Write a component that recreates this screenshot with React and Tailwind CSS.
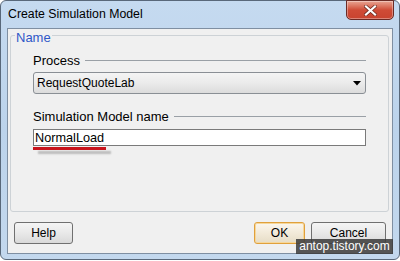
export default function App() {
    const font = { fontFamily: '"Liberation Sans", Arial, sans-serif' };

    return (
        <div className="w-[400px] h-[261px] bg-white" style={font}>
            <div className="flex flex-col w-[400px] h-[260px] rounded-[6px] border border-[#59687a] bg-gradient-to-b from-[#c5daf0] via-[#bcd3eb] to-[#c3d8ee] px-[6px] pb-[5px]">
                <div className="flex h-[27px] shrink-0 items-start justify-between">
                    <span className="pl-[1px] pt-[6px] text-[12.3px] leading-[14px] text-black">Create Simulation Model</span>
                    <div className="mr-[-1px] mt-[-1px] flex h-[20px] w-[48px] items-center justify-center rounded-b-[5px] border border-[#6b2b25] bg-gradient-to-b from-[#e8a493] via-[#cf4b36] to-[#c8432f] shadow-[inset_0_0_0_1px_rgba(255,255,255,0.35)]">
                        <svg width="13" height="11" viewBox="0 0 13 11">
                            <path d="M2 1.5 L11 9.5 M11 1.5 L2 9.5" stroke="#6a2a20" strokeWidth="3.6" strokeLinecap="square" />
                            <path d="M2 1.5 L11 9.5 M11 1.5 L2 9.5" stroke="#ffffff" strokeWidth="2.2" strokeLinecap="square" />
                        </svg>
                    </div>
                </div>

                <div className="flex flex-1 flex-col border border-[#7f8fa2] bg-[#f0f0f0] px-[2px]">
                    <div className="relative mt-[6px] mr-[1px] h-[177px] rounded-[3px] border border-[#cdd2d6] px-[22px] pt-[17px]">
                        <span className="absolute left-[4px] top-[-6px] bg-[#f0f0f0] px-[1px] text-[13px] leading-[15px] text-[#2f58c8]">Name</span>

                        <div className="flex h-[15px] items-center gap-[5px]">
                            <span className="text-[13px] leading-[15px] text-black">Process</span>
                            <div className="h-px flex-1 bg-[#9aa0a6]"></div>
                        </div>

                        <div className="mt-[4px] flex h-[22px] items-center justify-between rounded-[3px] border border-[#8a8f95] bg-gradient-to-b from-[#f4f4f4] via-[#ebebeb] to-[#dcdcdc] pl-[3px] pr-[4px]">
                            <span className="text-[12px] leading-[14px] text-black">RequestQuoteLab</span>
                            <svg width="8" height="5" viewBox="0 0 8 5">
                                <path d="M0 0 H8 L4 4.5 Z" fill="#000" />
                            </svg>
                        </div>

                        <div className="mt-[15px] flex h-[15px] items-center gap-[5px]">
                            <span className="text-[13px] leading-[15px] text-black">Simulation Model name</span>
                            <div className="h-px flex-1 bg-[#9aa0a6]"></div>
                        </div>

                        <div className="mt-[5px] flex h-[17px] items-center border border-[#7a7a7a] bg-white pl-[1px]">
                            <span className="text-[12.7px] leading-[14px] text-black">NormalLoad</span>
                        </div>

                        <div className="mt-[1px] w-[73px] h-[3px] bg-[#c8141c] shadow-[5px_4px_2px_rgba(0,0,0,0.22)]"></div>
                    </div>

                    <div className="relative mt-[10px] flex items-center justify-between pl-[4px] pr-[4px]">
                        <button className="flex h-[22px] w-[59px] items-center justify-center rounded-[3px] border border-[#707070] bg-gradient-to-b from-[#f5f5f5] via-[#e9e9e9] to-[#d9d9d9] text-[12px] leading-[14px] text-black">Help</button>
                        <div className="flex gap-[6px]">
                            <button className="flex h-[22px] w-[51px] items-center justify-center rounded-[3px] border border-[#e0a03c] bg-gradient-to-b from-[#fbf6ee] via-[#f2ead9] to-[#e6dcc6] text-[12px] leading-[14px] text-black shadow-[inset_0_0_0_1px_#f6d79a]">OK</button>
                            <button className="flex h-[22px] w-[75px] items-center justify-center rounded-[3px] border border-[#707070] bg-gradient-to-b from-[#f5f5f5] via-[#e9e9e9] to-[#d9d9d9] text-[12px] leading-[14px] text-black">Cancel</button>
                        </div>
                        <div className="absolute right-[-3px] top-[17px] flex h-[15px] w-[97px] items-center justify-center bg-[#3a3a3a]/85 text-[12px] leading-[15px] text-white">antop.tistory.com</div>
                    </div>
                </div>
            </div>
        </div>
    );
}
